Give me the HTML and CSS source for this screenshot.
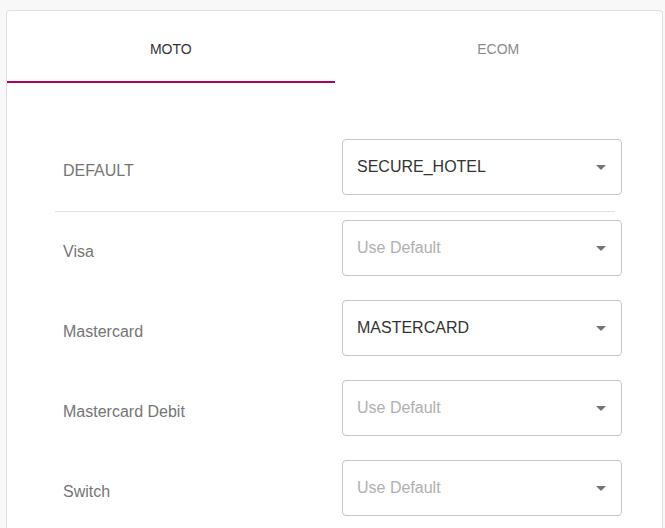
FILE: index.html
```html
<!DOCTYPE html>
<html>
<head>
<meta charset="utf-8">
<link rel="stylesheet" href="styles.css">
</head>
<body>
<div class="card">
  <div class="tabs">
    <div class="tab active">MOTO</div>
    <div class="tab">ECOM</div>
  </div>
  <div class="content">
    <div class="row default-row">
      <div class="label">DEFAULT</div>
      <div class="select"><span class="value">SECURE_HOTEL</span><span class="arrow"></span></div>
    </div>
    <div class="divider"></div>
    <div class="row">
      <div class="label">Visa</div>
      <div class="select"><span class="placeholder">Use Default</span><span class="arrow"></span></div>
    </div>
    <div class="row">
      <div class="label">Mastercard</div>
      <div class="select"><span class="value">MASTERCARD</span><span class="arrow"></span></div>
    </div>
    <div class="row">
      <div class="label">Mastercard Debit</div>
      <div class="select"><span class="placeholder">Use Default</span><span class="arrow"></span></div>
    </div>
    <div class="row last-row">
      <div class="label">Switch</div>
      <div class="select"><span class="placeholder">Use Default</span><span class="arrow"></span></div>
    </div>
  </div>
</div>
</body>
</html>
```
FILE: styles.css
```css
html, body {
  margin: 0;
  padding: 0;
  background: #f8f8f8;
  font-family: "Liberation Sans", Arial, sans-serif;
}
body {
  padding: 10px 2px 0 6px;
  height: 528px;
  box-sizing: border-box;
  overflow: hidden;
}
.card {
  background: #fff;
  border: 1px solid #e0e0e0;
  border-bottom: 0;
  border-radius: 4px 4px 0 0;
  height: 518px;
  box-sizing: border-box;
}
.tabs {
  display: flex;
}
.tab {
  flex: 1;
  height: 72px;
  box-sizing: border-box;
  display: flex;
  align-items: center;
  justify-content: center;
  padding-top: 5px;
  font-size: 14px;
  color: #8a8a8a;
  border-bottom: 2px solid transparent;
}
.tab.active {
  color: #333;
  border-bottom-color: #a8006e;
}
.content {
  padding: 56px 40px 0 48px;
}
.row {
  display: flex;
  align-items: center;
  margin-bottom: 24px;
}
.default-row {
  margin-bottom: 16px;
}
.last-row {
  margin-bottom: 0;
}
.label {
  flex: 1;
  padding-left: 8px;
  padding-top: 7px;
  font-size: 16px;
  color: #757575;
}
.divider {
  height: 1px;
  background: #e0e0e0;
  margin-right: 7px;
  margin-bottom: 8px;
}
.select {
  width: 280px;
  height: 56px;
  box-sizing: border-box;
  border: 1px solid #c6c6c6;
  border-radius: 4px;
  display: flex;
  align-items: center;
  justify-content: space-between;
  padding: 0 15px 0 14px;
  font-size: 16px;
}
.value {
  color: #333;
}
.placeholder {
  color: #b0b0b0;
}
.arrow {
  width: 0;
  height: 0;
  border-left: 5px solid transparent;
  border-right: 5px solid transparent;
  border-top: 5px solid #757575;
}
```
